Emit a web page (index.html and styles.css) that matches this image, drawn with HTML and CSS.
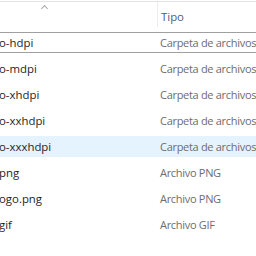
FILE: index.html
```html
<!DOCTYPE html>
<html lang="es">
<head>
<meta charset="utf-8">
<link rel="stylesheet" href="styles.css">
</head>
<body>
<div class="list">
  <div class="header">
    <div class="hcol name-h"><span class="caret"></span></div>
    <div class="hcol type-h">Tipo</div>
  </div>
  <div class="rows">
    <div class="row focused"><span class="name">o-hdpi</span><span class="type">Carpeta de archivos</span></div>
    <div class="row"><span class="name">o-mdpi</span><span class="type">Carpeta de archivos</span></div>
    <div class="row"><span class="name">o-xhdpi</span><span class="type">Carpeta de archivos</span></div>
    <div class="row"><span class="name">o-xxhdpi</span><span class="type">Carpeta de archivos</span></div>
    <div class="row hover"><span class="name">o-xxxhdpi</span><span class="type">Carpeta de archivos</span></div>
    <div class="row"><span class="name">png</span><span class="type">Archivo PNG</span></div>
    <div class="row"><span class="name">ogo.png</span><span class="type">Archivo PNG</span></div>
    <div class="row"><span class="name">gif</span><span class="type">Archivo GIF</span></div>
  </div>
</div>
</body>
</html>
```
FILE: styles.css
```css
html, body {
  margin: 0;
  padding: 0;
  background: #ffffff;
}
body {
  width: 256px;
  height: 256px;
  overflow: hidden;
  font-family: "Open Sans", "Noto Sans", sans-serif;
  font-size: 11.4px;
}
.list {
  border-top: 1px solid #e3e3e3;
  margin-top: 1px;
}
.header {
  display: flex;
  height: 30px;
}
.hcol {
  display: flex;
  align-items: center;
}
.name-h {
  width: 157px;
  flex-shrink: 0;
  border-right: 1px solid #ececec;
  margin-bottom: 5px;
  position: relative;
}
.caret {
  position: absolute;
  left: 42px;
  top: 4px;
  width: 4px;
  height: 4px;
  border-left: 1px solid #a8a8a8;
  border-top: 1px solid #a8a8a8;
  transform: rotate(45deg);
}
.type-h {
  padding-left: 3px;
  padding-top: 3px;
  color: #4c607a;
  margin-bottom: 5px;
}
.rows {
  display: flex;
  flex-direction: column;
  gap: 5px;
}
.row {
  display: flex;
  align-items: center;
  height: 21px;
  box-sizing: border-box;
}
.row.focused {
  border-top: 1px solid #a0a0a0;
  border-bottom: 1px solid #a0a0a0;
}
.row.hover {
  background: #e5f3ff;
}
.name {
  width: 161px;
  flex-shrink: 0;
  color: #1e1e1e;
  margin-left: -1px;
}
.type {
  color: #6d6d6d;
  white-space: nowrap;
  font-size: 11px;
  letter-spacing: -0.3px;
}
```
